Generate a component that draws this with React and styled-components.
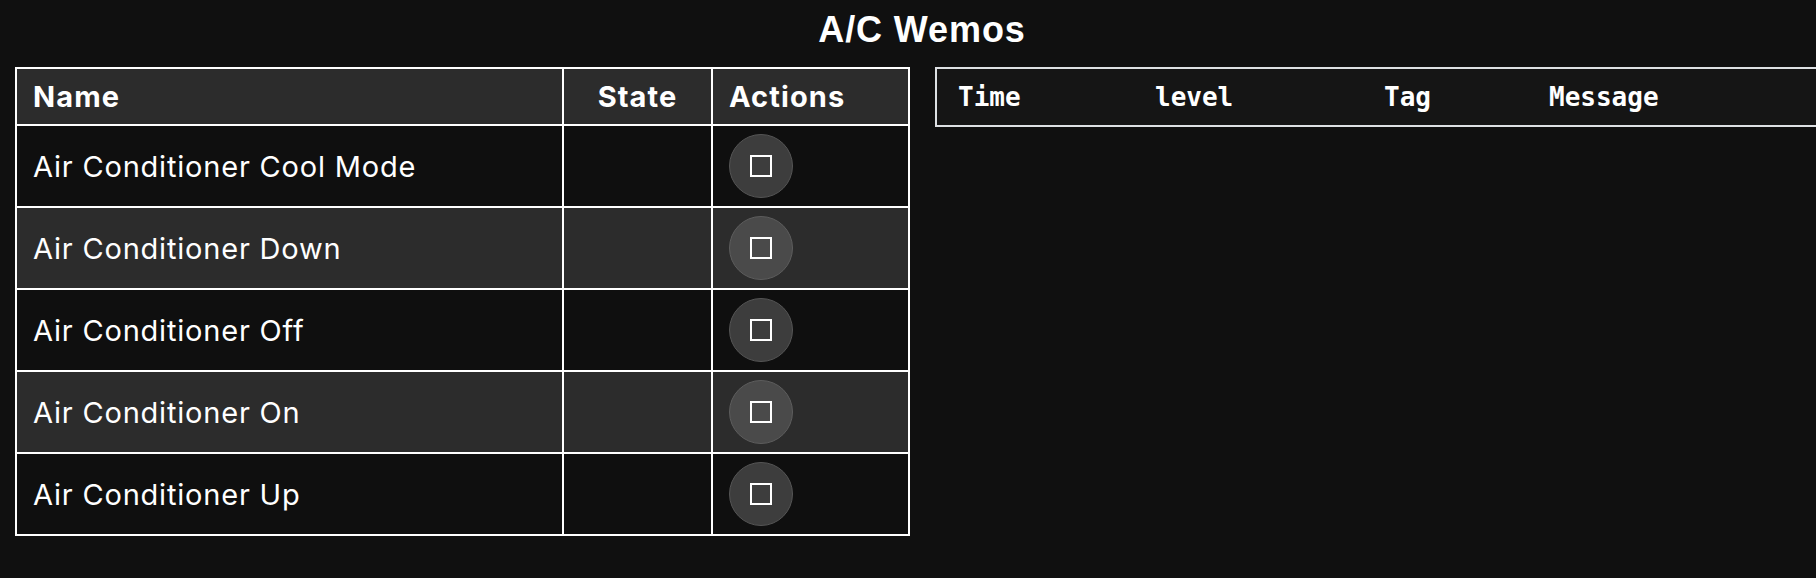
import React from 'react';
import styled, { createGlobalStyle } from 'styled-components';

const GlobalStyle = createGlobalStyle`
  html, body {
    margin: 0;
    padding: 0;
    background: #101010;
    color: #fff;
    overflow: hidden;
  }
  body {
    font-family: Inter, "Noto Sans", sans-serif;
  }
`;

const Page = styled.div`
  padding-top: 10px;
  min-height: 578px;
  box-sizing: border-box;
`;

const Title = styled.h1`
  margin: 0;
  padding-left: 28px;
  text-align: center;
  font-family: "Liberation Sans", Arial, sans-serif;
  font-size: 36px;
  line-height: 40px;
  letter-spacing: 0.9px;
  font-weight: 700;
`;

const Panels = styled.div`
  display: flex;
  align-items: flex-start;
  gap: 25px;
  margin-top: 17px;
  padding-left: 15px;
`;

const DeviceTable = styled.table`
  flex-shrink: 0;
  width: 895px;
  border-collapse: collapse;
  border: 2px solid #fff;
  font-size: 29px;
  letter-spacing: 0.8px;
`;

const HeadCell = styled.th`
  border: 2px solid #fff;
  background: #2c2c2c;
  padding: 11px 16px;
  line-height: 33px;
  font-weight: 700;
  letter-spacing: 1.1px;
  text-align: ${(p) => p.$align || 'left'};
  width: ${(p) => p.$width || 'auto'};
`;

const Row = styled.tr`
  background: ${(p) => (p.$alt ? '#2c2c2c' : '#0f0f0f')};
`;

const Cell = styled.td`
  border: 2px solid #fff;
  padding: 8px 16px;
  height: 64px;
  vertical-align: middle;
  font-weight: 400;
`;

const RoundButton = styled.button`
  width: 64px;
  height: 64px;
  border-radius: 50%;
  border: 1px solid ${(p) => (p.$alt ? '#5d5d5d' : '#555')};
  background: ${(p) => (p.$alt ? '#4a4a4a' : '#3d3d3d')};
  display: flex;
  align-items: center;
  justify-content: center;
  padding: 0;
  cursor: pointer;
`;

const LogTable = styled.table`
  flex-shrink: 0;
  width: 1100px;
  table-layout: fixed;
  border-collapse: collapse;
  border: 2px solid #dde0e3;
  background: #151515;
`;

const LogHead = styled.th`
  box-sizing: border-box;
  width: ${(p) => p.$width || 'auto'};
  height: 58px;
  padding: 0 0 0 21px;
  text-align: left;
  font-family: "DejaVu Sans Mono", "Liberation Mono", monospace;
  font-size: 26px;
  font-weight: 700;
`;

const StopIcon = () => (
  <svg width="22" height="22" viewBox="0 0 22 22">
    <rect x="1" y="1" width="20" height="20" fill="none" stroke="#fff" strokeWidth="2" />
  </svg>
);

const devices = [
  'Air Conditioner Cool Mode',
  'Air Conditioner Down',
  'Air Conditioner Off',
  'Air Conditioner On',
  'Air Conditioner Up',
];

export default function App() {
  return (
    <Page>
      <GlobalStyle />
      <Title>A/C Wemos</Title>
      <Panels>
        <DeviceTable>
          <thead>
            <tr>
              <HeadCell>Name</HeadCell>
              <HeadCell $align="center" $width="115px">State</HeadCell>
              <HeadCell $width="163px">Actions</HeadCell>
            </tr>
          </thead>
          <tbody>
            {devices.map((name, i) => (
              <Row key={name} $alt={i % 2 === 1}>
                <Cell>{name}</Cell>
                <Cell />
                <Cell>
                  <RoundButton $alt={i % 2 === 1} aria-label={`Run ${name}`}>
                    <StopIcon />
                  </RoundButton>
                </Cell>
              </Row>
            ))}
          </tbody>
        </DeviceTable>
        <LogTable>
          <thead>
            <tr>
              <LogHead $width="198px">Time</LogHead>
              <LogHead $width="229px">level</LogHead>
              <LogHead $width="165px">Tag</LogHead>
              <LogHead>Message</LogHead>
            </tr>
          </thead>
        </LogTable>
      </Panels>
    </Page>
  );
}
